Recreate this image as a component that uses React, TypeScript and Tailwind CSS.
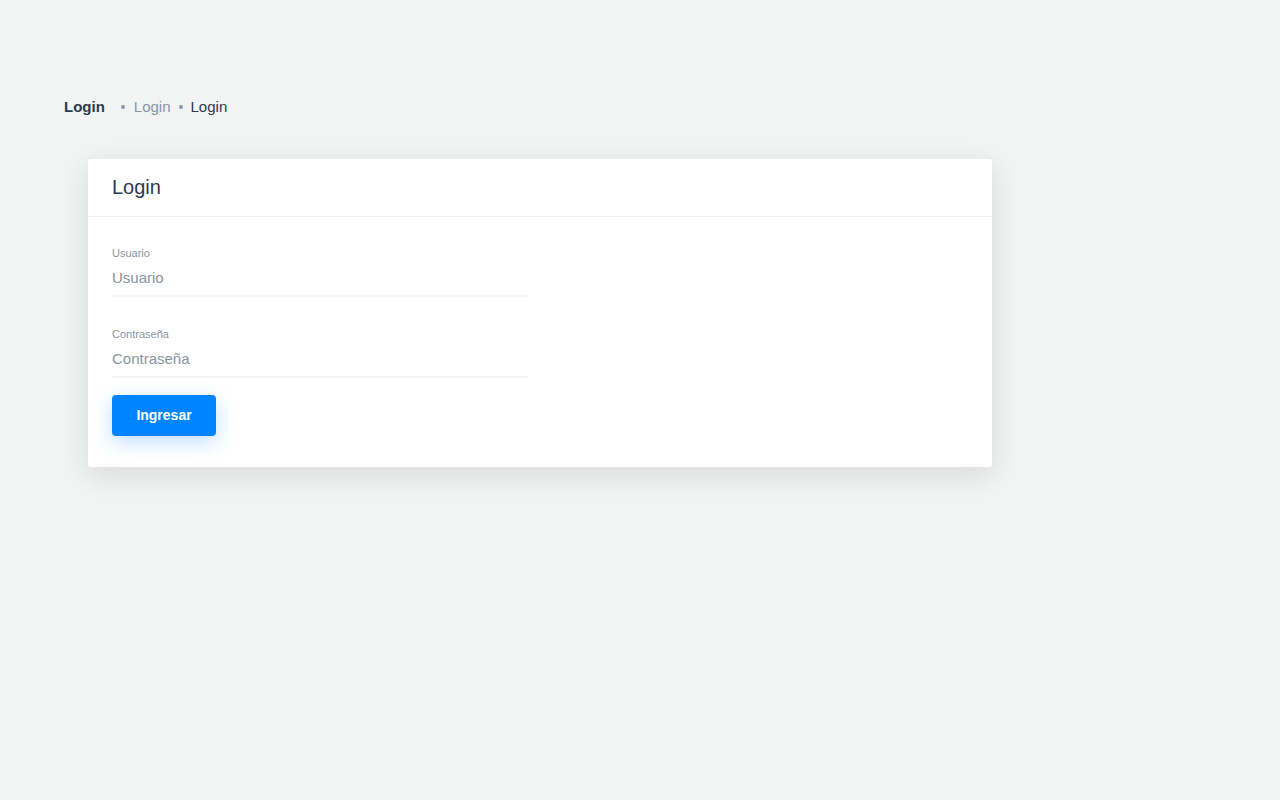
export default function App() {
  return (
    <div className="min-h-screen bg-[#f2f3f3] font-['Liberation_Sans',Arial,sans-serif]">
      <div className="px-16 pt-[97px]">
        <div className="flex items-center text-[15px] leading-5">
          <span className="font-bold text-[#2c3a4f]">Login</span>
          <span className="ml-[16px] mr-[9px] h-[4px] w-[4px] rounded-full bg-[#8a94a3]" />
          <span className="text-[#8a94a3]">Login</span>
          <span className="mx-[8px] h-[4px] w-[4px] rounded-full bg-[#8a94a3]" />
          <span className="text-[#2c3a4f]">Login</span>
        </div>

        <div className="ml-6 mt-[42px] w-[904px] rounded-[3px] bg-white shadow-[0_8px_28px_rgba(30,40,50,0.12)]">
          <div className="border-b border-[#edf0f2] px-6 pb-[17px] pt-[16px]">
            <h2 className="text-[20px] leading-6 text-[#2c3a4f]">Login</h2>
          </div>

          <form className="px-6 pb-[31px] pt-[29px]">
            <div className="w-[416px]">
              <label className="block text-[11px] leading-[14px] text-[#8a94a3]">Usuario</label>
              <input
                placeholder="Usuario"
                className="mt-[9px] block w-full border-b-2 border-[#f3f4f5] pb-[8px] text-[15px] leading-[18px] text-[#2c3a4f] outline-none placeholder:text-[#8a94a3]"
              />
            </div>

            <div className="mt-[30px] w-[416px]">
              <label className="block text-[11px] leading-[14px] text-[#8a94a3]">Contraseña</label>
              <input
                type="password"
                placeholder="Contraseña"
                className="mt-[9px] block w-full border-b-2 border-[#f3f4f5] pb-[8px] text-[15px] leading-[18px] text-[#2c3a4f] outline-none placeholder:text-[#8a94a3]"
              />
            </div>

            <button
              type="button"
              className="mt-[17px] h-[41px] w-[104px] rounded-[4px] bg-[#0084ff] text-[14px] font-bold text-white shadow-[0_6px_20px_rgba(0,132,255,0.25)]"
            >
              Ingresar
            </button>
          </form>
        </div>
      </div>
    </div>
  )
}
